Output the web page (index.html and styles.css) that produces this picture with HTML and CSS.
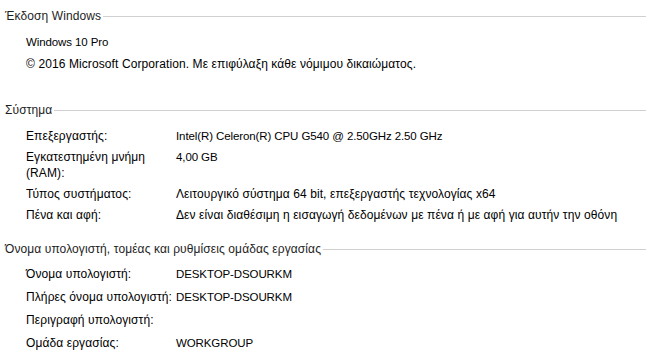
FILE: index.html
```html
<!DOCTYPE html>
<html lang="el">
<head>
  <meta charset="UTF-8" />
  <title>Σύστημα</title>
  <link rel="stylesheet" href="styles.css">
</head>
<body>

  <section class="group group-edition">
    <h2 class="group-title"><span>Έκδοση Windows</span></h2>
    <div class="rows">
      <div class="line latin">Windows 10 Pro</div>
      <div class="line">© 2016 Microsoft Corporation. Με επιφύλαξη κάθε νόμιμου δικαιώματος.</div>
    </div>
  </section>

  <section class="group group-system">
    <h2 class="group-title"><span>Σύστημα</span></h2>
    <div class="rows">
      <div class="row">
        <div class="label">Επεξεργαστής:</div>
        <div class="value latin">Intel(R) Celeron(R) CPU G540 @ 2.50GHz 2.50 GHz</div>
      </div>
      <div class="row">
        <div class="label">Εγκατεστημένη μνήμη (RAM):</div>
        <div class="value latin">4,00 GB</div>
      </div>
      <div class="row">
        <div class="label">Τύπος συστήματος:</div>
        <div class="value">Λειτουργικό σύστημα 64 bit, επεξεργαστής τεχνολογίας x64</div>
      </div>
      <div class="row">
        <div class="label">Πένα και αφή:</div>
        <div class="value">Δεν είναι διαθέσιμη η εισαγωγή δεδομένων με πένα ή με αφή για αυτήν την οθόνη</div>
      </div>
    </div>
  </section>

  <section class="group group-computer">
    <h2 class="group-title"><span>Όνομα υπολογιστή, τομέας και ρυθμίσεις ομάδας εργασίας</span></h2>
    <div class="rows">
      <div class="row">
        <div class="label">Όνομα υπολογιστή:</div>
        <div class="value latin">DESKTOP-DSOURKM</div>
      </div>
      <div class="row">
        <div class="label nowrap">Πλήρες όνομα υπολογιστή:</div>
        <div class="value latin">DESKTOP-DSOURKM</div>
      </div>
      <div class="row">
        <div class="label nowrap">Περιγραφή υπολογιστή:</div>
        <div class="value"></div>
      </div>
      <div class="row">
        <div class="label">Ομάδα εργασίας:</div>
        <div class="value latin">WORKGROUP</div>
      </div>
    </div>
  </section>

</body>
</html>
```

FILE: styles.css
```css
body {
  margin: 0;
  padding: 8px 1px 0 5px;
  background: #fff;
  color: #000;
  font-family: "Liberation Sans", Arial, sans-serif;
  font-size: 12px;
  line-height: 16px;
  letter-spacing: 0.1px;
}
.group-title {
  display: flex;
  align-items: center;
  gap: 2px;
  margin: 0;
  font-size: 12px;
  font-weight: normal;
  line-height: 16px;
  color: #1e1e1e;
  white-space: nowrap;
}
.group-title::after {
  content: "";
  flex: 1;
  border-top: 1px solid #d0d0d0;
}
.rows {
  display: flex;
  flex-direction: column;
  padding: 10px 0 0 21px;
}
.row {
  display: grid;
  grid-template-columns: 150px 1fr;
}
.label {
  padding-right: 30px;
}
.label.nowrap {
  white-space: nowrap;
  padding-right: 0;
}
.value {
  white-space: nowrap;
}
/* Segoe UI latin is narrower than Arial, so set it a bit smaller */
.latin {
  font-size: 11.5px;
  letter-spacing: -0.1px;
}

.group-edition .rows { gap: 6px; }
.group-system { margin-top: 30px; }
.group-system .rows { gap: 5px; }
.group-computer { margin-top: 18px; }
.group-computer .rows { gap: 7px; padding-top: 9px; }
```
